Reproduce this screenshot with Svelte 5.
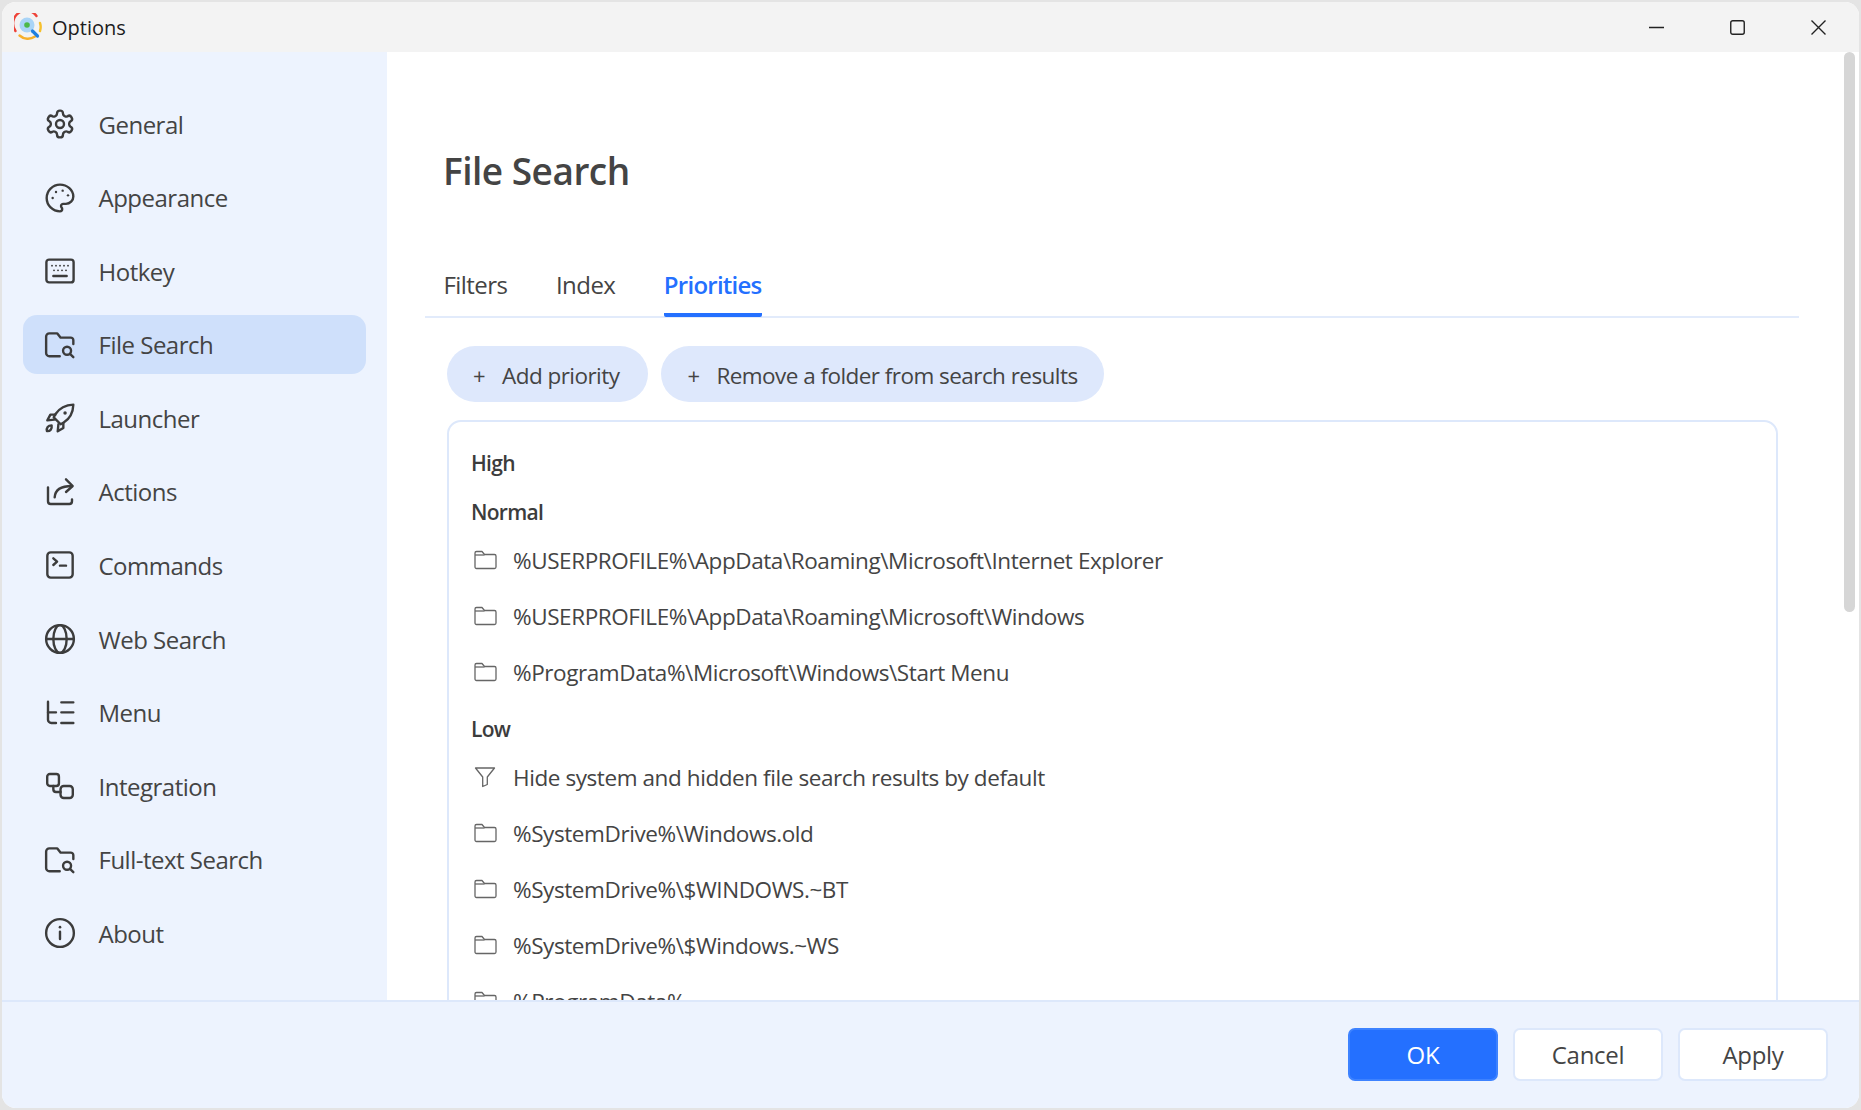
<script>
  const folderSearch = '<path d="M22 11.200V8.500A2 2 0 0 0 20 6.500h-7.500L10 3.300H4A2.400 2.400 0 0 0 1.600 5.700V18a2.400 2.400 0 0 0 2.400 2.400h7.800"/><circle cx="17.300" cy="16.300" r="3"/><path d="M19.700 18.800l2.300 2.300"/>';

  const navItems = [
    { label: 'General', icon: '<path d="M12.220 2h-.44a2 2 0 0 0-2 2v.18a2 2 0 0 1-1 1.730l-.43.25a2 2 0 0 1-2 0l-.15-.08a2 2 0 0 0-2.730.73l-.22.38a2 2 0 0 0 .73 2.730l.15.1a2 2 0 0 1 1 1.720v.51a2 2 0 0 1-1 1.740l-.15.09a2 2 0 0 0-.73 2.730l.22.38a2 2 0 0 0 2.730.73l.15-.08a2 2 0 0 1 2 0l.43.25a2 2 0 0 1 1 1.730V20a2 2 0 0 0 2 2h.44a2 2 0 0 0 2-2v-.18a2 2 0 0 1 1-1.730l.43-.25a2 2 0 0 1 2 0l.15.08a2 2 0 0 0 2.730-.73l.22-.39a2 2 0 0 0-.73-2.730l-.15-.08a2 2 0 0 1-1-1.740v-.5a2 2 0 0 1 1-1.740l.15-.09a2 2 0 0 0 .73-2.730l-.22-.38a2 2 0 0 0-2.730-.73l-.15.08a2 2 0 0 1-2 0l-.43-.25a2 2 0 0 1-1-1.730V4a2 2 0 0 0-2-2z"/><circle cx="12" cy="12" r="3"/>' },
    { label: 'Appearance', icon: '<path d="M12 2C6.500 2 2 6.500 2 12s4.500 10 10 10c.926 0 1.648-.746 1.648-1.688 0-.437-.18-.835-.437-1.125-.29-.289-.438-.652-.438-1.125a1.640 1.640 0 0 1 1.668-1.668h1.996c3.051 0 5.555-2.503 5.555-5.554C21.965 6.012 17.461 2 12 2z"/><circle class="dot" cx="6.500" cy="12" r=".9"/><circle class="dot" cx="9" cy="7.500" r=".9"/><circle class="dot" cx="14" cy="6.500" r=".9"/><circle class="dot" cx="18" cy="10" r=".9"/>' },
    { label: 'Hotkey', icon: '<rect x="1.800" y="3.500" width="20.400" height="17" rx="2"/><path d="M7 15.800h10"/><path class="thin" d="M6 8h.01M9 8h.01M12 8h.01M15 8h.01M18 8h.01M7.500 11.500h.01M10.500 11.500h.01M13.500 11.500h.01M16.500 11.500h.01"/>' },
    { label: 'File Search', active: true, icon: folderSearch },
    { label: 'Launcher', icon: '<path d="M22 2c-6 .2-10.500 2.800-13.500 7.200L7.300 11.500l5.200 5.200 2.300-1.300C19.200 12.500 21.800 8 22 2z"/><circle class="dot" cx="15.800" cy="8.200" r="1.300"/><path d="M8.500 9.500H4.800L2.500 13.800l5.300-.6"/><path d="M14.500 15.700v3.800L10.300 22l.5-5.300"/><path d="M2.200 21.800c-.5-2.500.8-4.300 3.500-4.300.5 2.700-1 4.500-3.500 4.300z"/>' },
    { label: 'Actions', icon: '<path d="M3 8.500V19a2 2 0 0 0 2 2h14a2 2 0 0 0 2-2v-1.500"/><path d="M8 16c.3-5 4-8.500 13-8.500"/><path d="M16.500 2.500l5 5-5 4.500"/>' },
    { label: 'Commands', icon: '<rect x="2.500" y="2.500" width="19" height="19" rx="2.500"/><path d="M7 7l2.800 2.500L7 12"/><path d="M12 12.500h4.500"/>' },
    { label: 'Web Search', icon: '<circle cx="12" cy="12" r="10.400"/><ellipse cx="12" cy="12" rx="5" ry="10.400"/><path d="M1.600 12h20.800"/>' },
    { label: 'Menu', icon: '<path d="M3 3.500V17a2.500 2.500 0 0 0 2.500 2.500H9"/><path d="M3 11.500h6M13 4h9M13 11.500h9M13 19.500h9"/>' },
    { label: 'Integration', icon: '<rect x="2.400" y="3" width="8.800" height="9" rx="2"/><rect x="12.400" y="12" width="9.200" height="9" rx="2.400"/><path d="M7 12v2.500a2 2 0 0 0 2 2h3.400"/>' },
    { label: 'Full-text Search', icon: folderSearch },
    { label: 'About', icon: '<circle cx="12" cy="12" r="10.400"/><path d="M12 11v5.500"/><circle class="dot" cx="12" cy="7.600" r="1"/>' }
  ];

  const rows = [
    { head: 'High' },
    { head: 'Normal' },
    { text: '%USERPROFILE%\\AppData\\Roaming\\Microsoft\\Internet Explorer' },
    { text: '%USERPROFILE%\\AppData\\Roaming\\Microsoft\\Windows' },
    { text: '%ProgramData%\\Microsoft\\Windows\\Start Menu' },
    { head: 'Low' },
    { text: 'Hide system and hidden file search results by default', filter: true },
    { text: '%SystemDrive%\\Windows.old' },
    { text: '%SystemDrive%\\$WINDOWS.~BT' },
    { text: '%SystemDrive%\\$Windows.~WS' },
    { text: '%ProgramData%' }
  ];
</script>

<div class="window">
  <header class="titlebar">
    <svg class="logo" viewBox="0 0 28 28" fill="none">
      <path d="M1.500 18A12.500 12.500 0 0 1 22.500 3" stroke="#ee4338" stroke-width="2.400" stroke-linecap="round"/>
      <path d="M26 10a12.500 12.500 0 0 1 0 8" stroke="#f6c02c" stroke-width="2.400" stroke-linecap="round"/>
      <path d="M5.500 22.500A12.500 12.500 0 0 0 21 23.500" stroke="#f6b02c" stroke-width="2.400" stroke-linecap="round"/>
      <circle cx="13" cy="12" r="7.500" fill="#a9d4f7"/>
      <circle cx="13" cy="12" r="2.800" fill="#4cb848"/>
      <path d="M18.500 18l5 5" stroke="#1f7fe0" stroke-width="3.200" stroke-linecap="round"/>
    </svg>
    <span class="title">Options</span>
    <div class="winbtns">
      <svg viewBox="0 0 15 15"><path d="M0 7.500h15"/></svg>
      <svg viewBox="0 0 15 15"><rect x=".75" y=".75" width="13.500" height="13.500" rx="2"/></svg>
      <svg viewBox="0 0 15 15"><path d="M.5.500l14 14M14.500.500l-14 14"/></svg>
    </div>
  </header>

  <div class="main">
    <nav class="sidebar">
      {#each navItems as item}
        <div class="nav-item" class:active={item.active}>
          <svg class="nav-icon" viewBox="0 0 24 24">{@html item.icon}</svg>
          <span>{item.label}</span>
        </div>
      {/each}
    </nav>

    <section class="content">
      <h1>File Search</h1>
      <div class="tabs">
        <div class="tab">Filters</div>
        <div class="tab">Index</div>
        <div class="tab selected">Priorities</div>
      </div>
      <div class="actions">
        <button class="pill"><span class="plus">+</span>Add priority</button>
        <button class="pill"><span class="plus">+</span>Remove a folder from search results</button>
      </div>
      <div class="card">
        {#each rows as row}
          {#if row.head}
            <div class="head">{row.head}</div>
          {:else}
            <div class="row">
              <svg class="row-icon" viewBox="0 0 24 24">
                {#if row.filter}
                  <path d="M2.500 3h19l-7.200 9v7.500l-4.600 2V12z"/>
                {:else}
                  <path d="M2 6.500V5a1.500 1.500 0 0 1 1.500-1.500H9l2.500 3H21.500A1.500 1.500 0 0 1 23 8v11a1.500 1.500 0 0 1-1.500 1.500h-18A1.500 1.500 0 0 1 2 19V6.500z"/><path d="M2 7h9.500"/>
                {/if}
              </svg>
              <span>{row.text}</span>
            </div>
          {/if}
        {/each}
      </div>
      <div class="scrollbar"></div>
    </section>
  </div>

  <footer class="footer">
    <button class="btn primary">OK</button>
    <button class="btn">Cancel</button>
    <button class="btn">Apply</button>
  </footer>
</div>

<style>
  :global(body) {
    margin: 0;
    background: #e4e4e4;
    overflow: hidden;
  }

  .window {
    box-sizing: border-box;
    width: 1857px;
    height: 1106px;
    margin: 2px 0 0 2px;
    display: flex;
    flex-direction: column;
    border-radius: 14px;
    overflow: hidden;
    background: #fff;
    font-family: "Open Sans", "Noto Sans", sans-serif;
    color: #444;
  }

  .titlebar {
    flex: 0 0 50px;
    display: flex;
    align-items: center;
    background: #f3f3f3;
    padding-left: 12px;
  }

  .logo {
    width: 28px;
    height: 28px;
  }

  .title {
    margin-left: 10px;
    font-size: 20px;
    color: #1c1c1c;
  }

  .winbtns {
    margin-left: auto;
    display: flex;
    gap: 66px;
    padding-right: 33px;
  }

  .winbtns svg {
    width: 15px;
    height: 15px;
    fill: none;
    stroke: #222;
    stroke-width: 1.400;
  }

  .main {
    flex: 1;
    display: flex;
    min-height: 0;
  }

  .sidebar {
    flex: 0 0 385px;
    box-sizing: border-box;
    background: #edf3fe;
    padding: 42.500px 21px 0 21px;
    display: flex;
    flex-direction: column;
    gap: 14.580px;
  }

  .nav-item {
    flex: 0 0 59px;
    display: flex;
    align-items: center;
    gap: 22.500px;
    padding-left: 21px;
    border-radius: 14px;
    font-size: 24px;
    letter-spacing: -0.500px;
  }

  .nav-item.active {
    background: #cfe0fb;
  }

  .nav-icon {
    flex: none;
    width: 32px;
    height: 32px;
    fill: none;
    stroke: #3c3c3c;
    stroke-width: 1.800;
    stroke-linecap: round;
    stroke-linejoin: round;
  }

  .nav-icon :global(.thin) {
    stroke-width: 1.400;
  }

  .nav-icon :global(.dot) {
    fill: #3c3c3c;
    stroke: none;
  }

  .content {
    flex: 1;
    position: relative;
    overflow: hidden;
    background: #fff;
    padding: 95px 0 0 38px;
    min-width: 0;
  }

  h1 {
    margin: 0 0 63px 18px;
    font-size: 37px;
    line-height: 48px;
    font-weight: 600;
    color: #444;
    letter-spacing: -0.500px;
  }

  .tabs {
    width: 1374px;
    height: 60px;
    display: flex;
    gap: 48.500px;
    padding-left: 18.500px;
    box-sizing: border-box;
    border-bottom: 2px solid #e2ebfb;
  }

  .tab {
    height: 59px;
    font-size: 24px;
    line-height: 54px;
    letter-spacing: -0.550px;
    box-sizing: border-box;
  }

  .tab.selected {
    color: #2470ff;
    font-weight: 600;
    letter-spacing: -0.750px;
    border-bottom: 4px solid #2470ff;
    border-radius: 2px;
  }

  .actions {
    display: flex;
    gap: 13px;
    margin: 28px 0 18px 22px;
  }

  .pill {
    height: 56px;
    border: 0;
    border-radius: 28px;
    padding: 2px 26px 0;
    background: #dee8fc;
    color: #444;
    font-family: inherit;
    font-size: 22.500px;
    letter-spacing: -0.550px;
  }

  .pill:first-child {
    padding-right: 29px;
  }

  .plus {
    margin-right: 17px;
    font-size: 22px;
  }

  .card {
    box-sizing: border-box;
    width: 1331px;
    height: 700px;
    margin-left: 22px;
    padding: 13px 22px 0 24px;
    border: 2px solid #dde8fb;
    border-radius: 14px;
    overflow: hidden;
  }

  .head {
    height: 42px;
    margin-top: 7px;
    margin-left: -2px;
    line-height: 42px;
    font-size: 21px;
    font-weight: 600;
    color: #3c3c3c;
    letter-spacing: -0.700px;
  }

  .row {
    box-sizing: border-box;
    height: 56px;
    padding-bottom: 2px;
    display: flex;
    align-items: center;
    gap: 16px;
    font-size: 22.500px;
    letter-spacing: -0.420px;
  }

  .row-icon {
    flex: none;
    width: 24px;
    height: 24px;
    fill: none;
    stroke: #666;
    stroke-width: 1.300;
    stroke-linejoin: round;
  }

  .scrollbar {
    position: absolute;
    top: 0;
    right: 4px;
    width: 11px;
    height: 560px;
    border-radius: 6px;
    background: #d6d6d6;
  }

  .footer {
    flex: 0 0 108px;
    box-sizing: border-box;
    display: flex;
    justify-content: flex-end;
    align-items: flex-start;
    gap: 15px;
    padding: 26px 31px 0 0;
    background: #edf3fe;
    border-top: 2px solid #dde8fb;
  }

  .btn {
    width: 150px;
    height: 53px;
    border: 2px solid #dde8fb;
    border-radius: 7px;
    background: #fff;
    color: #444;
    font-family: inherit;
    font-size: 24px;
    letter-spacing: -0.300px;
  }

  .btn.primary {
    background: #2470ff;
    border-color: #3d82ff;
    color: #fff;
  }
</style>
